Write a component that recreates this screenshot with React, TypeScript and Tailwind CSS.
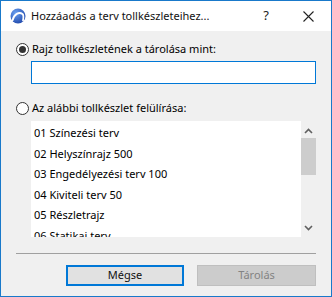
import React from 'react'

const items = [
  '01 Színezési terv',
  '02 Helyszínrajz 500',
  '03 Engedélyezési terv 100',
  '04 Kiviteli terv 50',
  '05 Részletrajz',
  '06 Statikai terv',
]

const Radio: React.FC<{ checked?: boolean }> = ({ checked }) => (
  <span className="w-[13px] h-[13px] rounded-full border border-[#333] bg-white flex items-center justify-center shrink-0">
    {checked && <span className="w-[7px] h-[7px] rounded-full bg-[#333]" />}
  </span>
)

const App: React.FC = () => {
  return (
    <div
      className="w-[332px] h-[297px] border border-[#1979ca] bg-[#f0f0f0] flex flex-col text-[11px] text-black overflow-hidden"
      style={{ fontFamily: '"Noto Sans", "Open Sans", sans-serif' }}
    >
      {/* title bar */}
      <div className="h-[30px] bg-white flex items-center shrink-0">
        <svg width="16" height="16" viewBox="0 0 16 16" className="ml-[9px]">
          <defs>
            <radialGradient id="g" cx="0.35" cy="0.3" r="0.8">
              <stop offset="0" stopColor="#6aa0f0" />
              <stop offset="1" stopColor="#1d45a8" />
            </radialGradient>
          </defs>
          <circle cx="8" cy="8" r="7.5" fill="url(#g)" />
          <path d="M2.5 12.5 C4 6 9 3.5 12.5 6 C13.8 7.2 13.5 10 13 12.5" stroke="white" strokeWidth="1.8" fill="none" strokeLinecap="round" />
        </svg>
        <span className="ml-[5px] text-[11px] text-[#111]">Hozzáadás a terv tollkészleteihez...</span>
        <span className="ml-auto mr-[34px] text-[13px] text-[#222]">?</span>
        <svg width="11" height="11" viewBox="0 0 11 11" className="mr-[17px]">
          <path d="M0.5 0.5 L10.5 10.5 M10.5 0.5 L0.5 10.5" stroke="#222" strokeWidth="1.1" />
        </svg>
      </div>

      {/* body */}
      <div className="flex-1 flex flex-col px-[15px]">
        <div className="flex items-center gap-[3px] mt-[10px] h-[16px]">
          <Radio checked />
          <span>Rajz tollkészletének a tárolása mint:</span>
        </div>
        <div className="ml-[15px] mt-[4px] h-[23px] bg-white border border-[#0078d7]" />

        <div className="flex items-center gap-[3px] mt-[16px] h-[16px]">
          <Radio />
          <span>Az alábbi tollkészlet felülírása:</span>
        </div>

        <div className="ml-[15px] mt-[5px] h-[116px] flex">
          <div className="flex-1 bg-white pt-[2px] pl-[3px] overflow-hidden">
            {items.map((it) => (
              <div key={it} className="h-[20.5px] flex items-center whitespace-nowrap">
                {it}
              </div>
            ))}
          </div>
          <div className="w-[15px] bg-[#f0f0f0] flex flex-col items-center">
            <svg width="9" height="6" viewBox="0 0 9 6" className="mt-[7px]">
              <path d="M1 5 L4.5 1.5 L8 5" stroke="#606060" strokeWidth="1.6" fill="none" />
            </svg>
            <div className="w-[15px] h-[37px] bg-[#cdcdcd] mt-[4px]" />
            <svg width="9" height="6" viewBox="0 0 9 6" className="mt-auto mb-[6px]">
              <path d="M1 1 L4.5 4.5 L8 1" stroke="#606060" strokeWidth="1.6" fill="none" />
            </svg>
          </div>
        </div>

        <div className="mt-[16px] h-px bg-[#a0a0a0]" />

        <div className="flex justify-end gap-[13px] mt-[11px]">
          <button className="w-[118px] h-[21px] border-2 border-[#0078d7] bg-[#e1e1e1] text-[11px] text-[#111] flex items-center justify-center">
            Mégse
          </button>
          <button className="w-[119px] h-[21px] border border-[#bfbfbf] bg-[#cccccc] text-[11px] text-[#838383] flex items-center justify-center">
            Tárolás
          </button>
        </div>
      </div>
    </div>
  )
}

export default App
